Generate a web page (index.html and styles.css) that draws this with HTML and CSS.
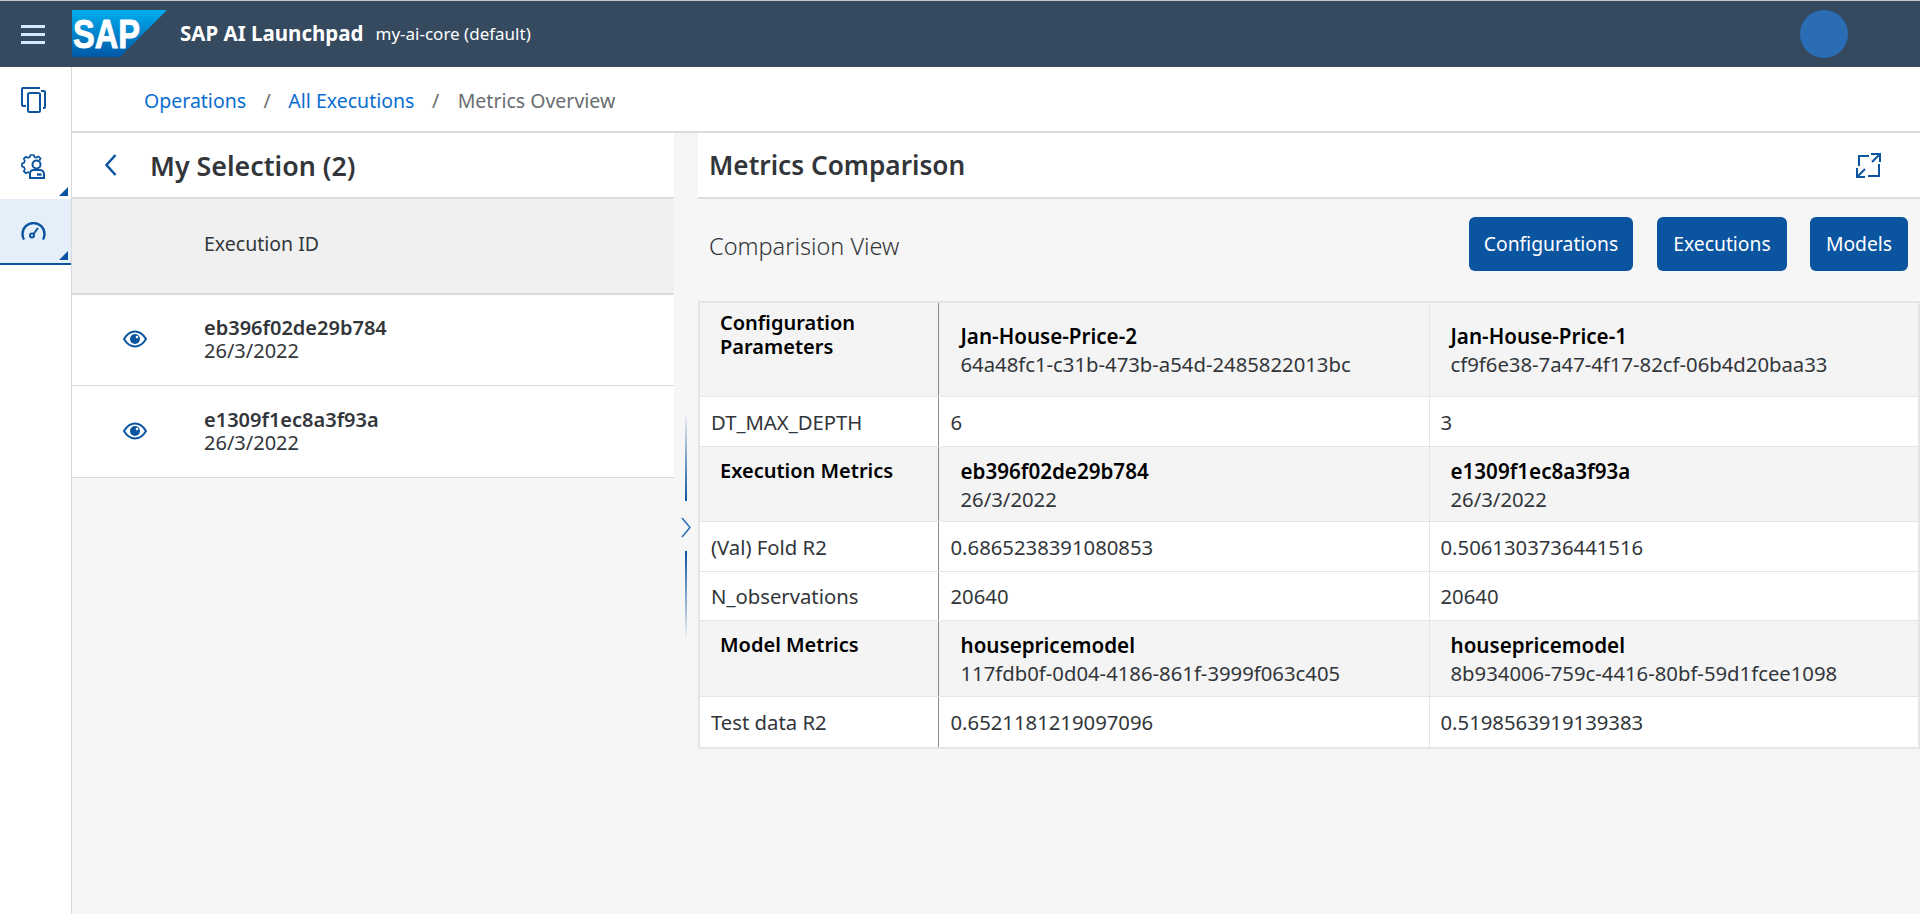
FILE: index.html
```html
<!DOCTYPE html>
<html lang="en">
<head>
    <meta charset="UTF-8">
    <meta name="viewport" content="width=device-width, initial-scale=1.0">
    <title>SAP AI Launchpad</title>
    <link rel="stylesheet" href="styles.css">
</head>
<body>
    <!-- Shell bar -->
    <header class="shell">
        <button class="menu-btn" aria-label="Menu"><span></span><span></span><span></span></button>
        <svg class="logo" viewBox="0 0 95 47" width="95" height="47">
            <defs>
                <linearGradient id="logoFill" x1="0" y1="0" x2="0" y2="1">
                    <stop offset="0" stop-color="#00aeef"/>
                    <stop offset="1" stop-color="#0058a8"/>
                </linearGradient>
            </defs>
            <polygon points="0,0 95,0 48,47 0,47" fill="url(#logoFill)"/>
            <text x="1" y="38" class="logo-text" textLength="67" lengthAdjust="spacingAndGlyphs">SAP</text>
        </svg>
        <span class="app-name">SAP AI Launchpad</span>
        <span class="tenant">my-ai-core (default)</span>
        <span class="avatar"></span>
    </header>

    <div class="app-body">
        <!-- Side navigation -->
        <nav class="sidenav">
            <a class="nav-item">
                <svg viewBox="0 0 25 26" width="25" height="26" class="icon">
                    <path d="M5 19H2a1 1 0 0 1-1-1V2a1 1 0 0 1 1-1h17"/>
                    <rect x="7" y="6" width="12" height="19" rx="1.500"/>
                    <path d="M20 4h3a1 1 0 0 1 1 1v15a1 1 0 0 1-1 1h-1"/>
                </svg>
            </a>
            <a class="nav-item has-sub">
                <svg viewBox="0 0 25 25" width="25" height="25" class="icon">
                    <path d="M18.500 6.500l1-2-2-2-2.500 1-1.500-.5-.7-2H9.500l-.7 2-1.800.8-2.200-1-2 2 1 2.200-.8 1.800-2 .7v3l2 .7.8 1.800-1 2.200 2 2 2.200-1 1 .4" stroke-width="1.700"/>
                    <circle cx="15.500" cy="10.500" r="4"/>
                    <path d="M9 24v-4.500a3.500 3.500 0 0 1 3.500-3.500h6a4 4 0 0 1 4.500 4v4z"/>
                    <path d="M16 20.500h4.500" stroke-width="2.400"/>
                </svg>
            </a>
            <a class="nav-item has-sub active">
                <svg viewBox="0 0 24 18" width="25" height="18" class="icon">
                    <path d="M2.500 17.500A11 11 0 0 1 1 12a11 11 0 0 1 22 0 11 11 0 0 1-1.500 5.500" stroke-width="2.400"/>
                    <circle cx="10.500" cy="13.500" r="2"/>
                    <path d="M12 12l4.500-6"/>
                </svg>
            </a>
        </nav>

        <main class="content">
            <div class="breadcrumb">
                <a>Operations</a><span class="sep">/</span><a>All Executions</a><span class="sep">/</span><span class="current">Metrics Overview</span>
            </div>

            <div class="panes">
                <!-- Left: selected executions -->
                <section class="left-pane">
                    <div class="pane-head">
                        <svg viewBox="0 0 12 22" width="12" height="22" class="icon back"><path d="M10.500 1L1.500 11l9 10"/></svg>
                        <h2>My Selection (2)</h2>
                    </div>
                    <div class="list-head">Execution ID</div>
                    <div class="list-row">
                        <svg viewBox="0 0 24 18" width="24" height="18" class="eye"><path class="eye-line" d="M1 9c3-5 7-7.500 11-7.500S20 4 23 9c-3 5-7 7.500-11 7.500S4 14 1 9z"/><circle cx="12" cy="9" r="5"/><circle cx="14" cy="7" r="1.300" fill="#fff"/></svg>
                        <div>
                            <div class="row-title">eb396f02de29b784</div>
                            <div class="row-sub">26/3/2022</div>
                        </div>
                    </div>
                    <div class="list-row">
                        <svg viewBox="0 0 24 18" width="24" height="18" class="eye"><path class="eye-line" d="M1 9c3-5 7-7.500 11-7.500S20 4 23 9c-3 5-7 7.500-11 7.500S4 14 1 9z"/><circle cx="12" cy="9" r="5"/><circle cx="14" cy="7" r="1.300" fill="#fff"/></svg>
                        <div>
                            <div class="row-title">e1309f1ec8a3f93a</div>
                            <div class="row-sub">26/3/2022</div>
                        </div>
                    </div>
                </section>

                <!-- Splitter -->
                <div class="splitter">
                    <span class="grip grip-top"></span>
                    <svg viewBox="0 0 10 21" width="10" height="21" class="grip-arrow"><path d="M1 1l8 9.500-8 9.500"/></svg>
                    <span class="grip grip-bottom"></span>
                </div>

                <!-- Right: comparison -->
                <section class="right-pane">
                    <div class="pane-head spread">
                        <h2>Metrics Comparison</h2>
                        <svg viewBox="0 0 25 25" width="25" height="25" class="icon expand">
                            <path d="M13 3H3v10M23 11v12H12"/>
                            <path d="M15 1h9v8M24 1l-8 8M1 15v9h8M1 24l8-8"/>
                        </svg>
                    </div>
                    <div class="toolbar">
                        <span class="view-title">Comparision View</span>
                        <div class="actions">
                            <button class="btn btn-config">Configurations</button>
                            <button class="btn btn-exec">Executions</button>
                            <button class="btn btn-model">Models</button>
                        </div>
                    </div>

                    <table class="compare">
                        <colgroup><col class="col-label"><col class="col-a"><col></colgroup>
                        <tr class="group first-group h-94">
                            <th>Configuration<br>Parameters</th>
                            <td class="middle"><b>Jan-House-Price-2</b><span>64a48fc1-c31b-473b-a54d-2485822013bc</span></td>
                            <td class="middle"><b>Jan-House-Price-1</b><span>cf9f6e38-7a47-4f17-82cf-06b4d20baa33</span></td>
                        </tr>
                        <tr class="h-50">
                            <td>DT_MAX_DEPTH</td><td>6</td><td>3</td>
                        </tr>
                        <tr class="group h-75">
                            <th>Execution Metrics</th>
                            <td><b>eb396f02de29b784</b><span>26/3/2022</span></td>
                            <td><b>e1309f1ec8a3f93a</b><span>26/3/2022</span></td>
                        </tr>
                        <tr class="h-50">
                            <td>(Val) Fold R2</td><td>0.6865238391080853</td><td>0.5061303736441516</td>
                        </tr>
                        <tr class="h-49">
                            <td>N_observations</td><td>20640</td><td>20640</td>
                        </tr>
                        <tr class="group h-76">
                            <th>Model Metrics</th>
                            <td><b>housepricemodel</b><span>117fdb0f-0d04-4186-861f-3999f063c405</span></td>
                            <td><b>housepricemodel</b><span>8b934006-759c-4416-80bf-59d1fcee1098</span></td>
                        </tr>
                        <tr class="h-52">
                            <td>Test data R2</td><td>0.6521181219097096</td><td>0.5198563919139383</td>
                        </tr>
                    </table>
                </section>
            </div>
        </main>
    </div>
</body>
</html>
```

FILE: styles.css
```css
* {
    box-sizing: border-box;
}

html, body {
    height: 100%;
}

body {
    margin: 0;
    display: flex;
    flex-direction: column;
    height: 914px;
    overflow: hidden;
    font-family: "Noto Sans", Arial, sans-serif;
    color: #32363a;
    background-color: #f6f6f6;
    border-top: 1px solid #c8c8c8;
}

/* Shell bar */
.shell {
    height: 66px;
    flex: none;
    display: flex;
    align-items: center;
    background-color: #354a5f;
    color: #fff;
}

.menu-btn {
    width: 72px;
    height: 66px;
    padding: 0 0 0 21px;
    border: none;
    background: none;
    display: flex;
    flex-direction: column;
    justify-content: center;
    gap: 5px;
}

.menu-btn span {
    display: block;
    width: 24px;
    height: 3px;
    background-color: #d1e8ff;
}

.logo {
    margin-top: -1px;
    margin-right: 13px;
}

.logo-text {
    font-family: "Liberation Sans", Arial, sans-serif;
    font-size: 41px;
    font-weight: bold;
    fill: #fff;
    stroke: #fff;
    stroke-width: 1;
}

.app-name {
    font-size: 20.500px;
    font-weight: bold;
    margin-bottom: 2px;
}

.tenant {
    font-size: 17px;
    margin: 0 0 2px 12px;
}

.avatar {
    width: 48px;
    height: 48px;
    border-radius: 50%;
    background-color: #2a6db4;
    margin-left: auto;
    margin-right: 72px;
}

/* Layout */
.app-body {
    flex: 1;
    display: flex;
    min-height: 0;
}

.icon {
    fill: none;
    stroke: #0a54a0;
    stroke-width: 2;
}

/* Side navigation */
.sidenav {
    width: 72px;
    flex: none;
    background-color: #fff;
    border-right: 1px solid #d9d9d9;
}

.nav-item {
    height: 66px;
    display: flex;
    align-items: center;
    padding-left: 21px;
    position: relative;
}

.has-sub::after {
    content: "";
    position: absolute;
    right: 3px;
    bottom: 3px;
    border-style: solid;
    border-width: 0 0 9px 9px;
    border-color: transparent transparent #0a54a0 transparent;
}

.nav-item.active {
    background-color: #e5eff9;
    border-bottom: 2px solid #0a54a0;
}

/* Breadcrumb */
.content {
    flex: 1;
    display: flex;
    flex-direction: column;
    min-width: 0;
}

.breadcrumb {
    height: 66px;
    flex: none;
    display: flex;
    align-items: center;
    padding: 2px 0 0 72px;
    background-color: #fff;
    border-bottom: 2px solid #dcdcdc;
    font-size: 19.500px;
}

.breadcrumb a {
    color: #0a6ed1;
}

.breadcrumb .sep {
    margin: 0 17.500px;
    color: #6a6d70;
}

.breadcrumb .current {
    color: #6a6d70;
    margin-left: 1px;
}

/* Panes */
.panes {
    flex: 1;
    display: flex;
    min-height: 0;
}

.left-pane {
    width: 602px;
    flex: none;
}

.pane-head {
    height: 66px;
    display: flex;
    align-items: center;
    background-color: #fff;
    border-bottom: 2px solid #dcdcdc;
    padding-left: 33px;
}

.pane-head h2 {
    margin: 0;
    font-size: 26.800px;
    font-weight: 600;
    color: #32363a;
}

.pane-head .back {
    margin-right: 33px;
    stroke-width: 2.500;
}

.pane-head.spread {
    justify-content: space-between;
    padding-left: 11px;
    padding-right: 39px;
}

.pane-head.spread h2 {
    font-size: 26.200px;
}

.list-head {
    height: 96px;
    display: flex;
    align-items: center;
    padding: 0 0 6px 132px;
    background-color: #f0f0f0;
    border-bottom: 2px solid #dcdcdc;
    font-size: 19.500px;
}

.list-row {
    height: 91px;
    display: flex;
    align-items: center;
    gap: 57px;
    padding: 0 0 2px 51px;
    background-color: #fff;
    border-bottom: 1px solid #d9d9d9;
    font-size: 20px;
    line-height: 23px;
}

.list-row + .list-row {
    height: 92px;
}

.row-title {
    font-weight: 600;
}

.eye {
    fill: #0a54a0;
    flex: none;
}

.eye .eye-line {
    fill: #fff;
    stroke: #0a54a0;
    stroke-width: 2;
}

/* Splitter */
.splitter {
    width: 24px;
    flex: none;
    position: relative;
}

.grip {
    position: absolute;
    left: 11px;
    width: 2px;
}

.grip-top {
    top: 279px;
    height: 89px;
    background: linear-gradient(to bottom, #f6f6f6, #0a54a0);
}

.grip-bottom {
    top: 418px;
    height: 89px;
    background: linear-gradient(to top, #f6f6f6, #0a54a0);
}

.grip-arrow {
    position: absolute;
    left: 7px;
    top: 384px;
    fill: none;
    stroke: #2a6db4;
    stroke-width: 1.500;
}

/* Right pane */
.right-pane {
    flex: 1;
    min-width: 0;
}

.toolbar {
    height: 102px;
    display: flex;
    align-items: center;
    justify-content: space-between;
    padding: 0 12px 12px 11px;
}

.view-title {
    font-size: 23.500px;
    font-weight: 300;
    color: #32363a;
    margin-top: 4px;
}

.actions {
    display: flex;
}

.btn {
    height: 54px;
    border: none;
    border-radius: 6px;
    background-color: #0a54a0;
    color: #fff;
    font-family: inherit;
    font-size: 19.300px;
    padding: 0 0 2px;
}

.btn-config {
    width: 164px;
    margin-right: 24px;
}

.btn-exec {
    width: 130px;
    margin-right: 23px;
}

.btn-model {
    width: 98px;
}

/* Comparison table */
.compare {
    width: 100%;
    table-layout: fixed;
    border-collapse: collapse;
    background-color: #fff;
    border: 2px solid #e5e5e5;
    font-size: 20.300px;
    line-height: 24px;
}

.col-label {
    width: 239px;
}

.col-a {
    width: 491px;
}

.compare td, .compare th {
    padding: 0 0 0 11px;
    border: 1px solid #e5e5e5;
    text-align: left;
    vertical-align: middle;
}

.compare td:first-child {
    border-right: 1px solid #8a8a8a;
}

.compare td:nth-child(2) {
    padding-left: 12px;
}

.compare .group th {
    padding: 12px 0 0 20px;
    border-right: 1px solid #8a8a8a;
    vertical-align: top;
    font-size: 20px;
    font-weight: 600;
    color: #000;
}

.compare .first-group th {
    padding-top: 8px;
}

.compare .group {
    background-color: #f4f4f4;
}

.compare .group td {
    padding: 12px 0 0 21px;
    vertical-align: top;
}

.compare .group td:nth-child(2) {
    padding-left: 22px;
}

.compare .group td.middle {
    padding-top: 2px;
    vertical-align: middle;
}

.compare .h-50 td {
    padding-top: 2px;
}

.compare b {
    display: block;
    font-size: 20.600px;
    font-weight: 600;
    color: #000;
}

.compare span {
    display: block;
    margin-top: 4px;
}

.h-94 { height: 94px; }
.h-76 { height: 76px; }
.h-75 { height: 75px; }
.h-52 { height: 52px; }
.h-50 { height: 50px; }
.h-49 { height: 49px; }
```
